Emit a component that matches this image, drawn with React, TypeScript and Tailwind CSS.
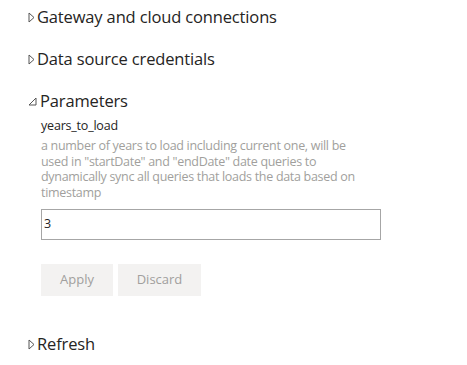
import React from "react";

const font = { fontFamily: '"Open Sans", "Noto Sans", sans-serif' };

function Caret({ open }: { open?: boolean }) {
  if (open) {
    return (
      <svg width="9" height="9" viewBox="0 0 9 9" className="mr-[3px] shrink-0">
        <path d="M8 1 L8 8 L1 8 Z" fill="none" stroke="#555" strokeWidth="1" strokeLinejoin="miter" />
      </svg>
    );
  }
  return (
    <svg width="7" height="11" viewBox="0 0 7 11" className="mr-[2px] shrink-0">
      <path d="M1 1 L6 5.5 L1 10 Z" fill="none" stroke="#555" strokeWidth="1" />
    </svg>
  );
}

function SectionHeader({ title, open }: { title: string; open?: boolean }) {
  return (
    <div className="flex items-center h-[34px] text-[16.5px] text-[#252423] tracking-[-0.15px]">
      <Caret open={open} />
      <span>{title}</span>
    </div>
  );
}

export default function App() {
  return (
    <div className="w-[467px] h-[365px] bg-white overflow-hidden pl-[28px]" style={font}>
      <SectionHeader title="Gateway and cloud connections" />
      <div className="h-[8px]" />
      <SectionHeader title="Data source credentials" />
      <div className="h-[8px]" />
      <SectionHeader title="Parameters" open />

      <div className="pl-[13px]">
        <div className="text-[12.5px] leading-[16px] text-[#252423] tracking-[-0.2px]">years_to_load</div>
        <div className="w-[325px] text-[12.5px] leading-[15.5px] text-[#a19f9d] tracking-[-0.3px] mt-[4px]">
          a number of years to load including current one, will be used in "startDate" and "endDate" date queries to
          dynamically sync all queries that loads the data based on timestamp
        </div>
        <div className="mt-[9px] w-[340px] h-[31px] border border-[#a6a6a6] flex items-center px-[2px] text-[12.5px] text-[#252423]">
          3
        </div>
        <div className="flex gap-[5px] mt-[24px]">
          <button className="w-[72px] h-[32px] bg-[#f3f2f1] text-[13px] text-[#a19f9d]">Apply</button>
          <button className="w-[83px] h-[32px] bg-[#f3f2f1] text-[13px] text-[#a19f9d]">Discard</button>
        </div>
      </div>

      <div className="mt-[31px]">
        <SectionHeader title="Refresh" />
      </div>
    </div>
  );
}
